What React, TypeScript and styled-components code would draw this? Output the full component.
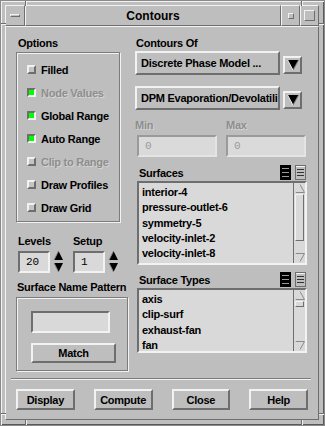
import React from "react";
import styled, { createGlobalStyle, css } from "styled-components";

const BG = "#bebebe";
const LIGHT = "#f2f2f2";
const DARK = "#6e6e6e";
const FIELD = "#d9d9d9";
const FONT = `"Liberation Sans", Arial, sans-serif`;
const DISABLED = "#8e8e8e";

const GlobalStyle = createGlobalStyle`
  html, body { margin: 0; padding: 0; background: ${BG}; }
  body { font-family: ${FONT}; }
`;

const raised = (w: number) => css`
  border-style: solid;
  border-width: ${w}px;
  border-color: ${LIGHT} ${DARK} ${DARK} ${LIGHT};
`;
const sunken = (w: number) => css`
  border-style: solid;
  border-width: ${w}px;
  border-color: ${DARK} ${LIGHT} ${LIGHT} ${DARK};
`;

const Window = styled.div`
  position: relative;
  width: 325px;
  height: 426px;
  box-sizing: border-box;
  background: ${BG};
  border: 1px solid #8a8a8a;
  box-shadow: inset 1px 1px 0 ${LIGHT}, inset -1px -1px 0 #5a5a5a;
  padding: 4px 5px 5px 4px;
  display: flex;
  flex-direction: column;
  font-family: ${FONT};
  font-weight: bold;
  font-size: 11px;
  letter-spacing: -0.25px;
  color: #000;
`;

const CornerV = styled.div<{ $x: number; $top?: boolean }>`
  position: absolute;
  left: ${(p) => p.$x}px;
  ${(p) => (p.$top ? "top: 0;" : "bottom: 0;")}
  width: 1px;
  height: 5px;
  background: ${DARK};
  box-shadow: 1px 0 0 ${LIGHT};
`;
const CornerH = styled.div<{ $y: number; $left?: boolean }>`
  position: absolute;
  top: ${(p) => p.$y}px;
  ${(p) => (p.$left ? "left: 0;" : "right: 0;")}
  width: 5px;
  height: 1px;
  background: ${DARK};
  box-shadow: 0 1px 0 ${LIGHT};
`;

const TitleBar = styled.div`
  display: flex;
  height: 21px;
  flex: none;
`;
const TitleButton = styled.div<{ $w: number }>`
  ${raised(1)}
  box-sizing: border-box;
  width: ${(p) => p.$w}px;
  display: flex;
  align-items: center;
  justify-content: center;
`;
const TitleText = styled.div`
  ${raised(1)}
  box-sizing: border-box;
  flex: 1;
  display: flex;
  align-items: center;
  justify-content: center;
  font-size: 12px;
  letter-spacing: 0;
`;
const MenuDash = styled.div`
  width: 10px;
  height: 3px;
  box-sizing: border-box;
  ${raised(1)}
  background: ${BG};
`;
const MinSquare = styled.div`
  width: 4px;
  height: 4px;
  ${raised(1)}
`;
const MaxSquare = styled.div`
  width: 11px;
  height: 11px;
  box-sizing: border-box;
  ${raised(1)}
`;

const Content = styled.div`
  ${raised(1)}
  flex: 1;
  display: flex;
  flex-direction: column;
  padding: 10px 10px 0 10px;
`;

const Main = styled.div`
  display: flex;
  align-items: flex-start;
  gap: 7px;
`;

const LeftCol = styled.div`
  width: 112px;
  display: flex;
  flex-direction: column;
`;
const RightCol = styled.div`
  width: 172px;
  display: flex;
  flex-direction: column;
`;

const disabledText = css`
  color: ${DISABLED};
  text-shadow: 1px 1px 0 #d4d4d4;
`;

const Label = styled.div<{ $indent?: number; $disabled?: boolean }>`
  height: 13px;
  line-height: 13px;
  padding-left: ${(p) => p.$indent ?? 0}px;
  white-space: nowrap;
  ${(p) => p.$disabled && disabledText}
`;

const Etched = styled.div`
  border: 1px solid #7c7c7c;
  box-shadow: inset 1px 1px 0 ${LIGHT}, 1px 1px 0 ${LIGHT};
`;

const OptionsFrame = styled(Etched)`
  margin-top: 2px;
  width: 104px;
  height: 170px;
  box-sizing: border-box;
  padding: 5px 0 0 10px;
`;

const ToggleRow = styled.div<{ $disabled?: boolean }>`
  height: 23px;
  display: flex;
  align-items: center;
  gap: 5px;
  white-space: nowrap;
  ${(p) => p.$disabled && disabledText}
`;
const Indicator = styled.div<{ $on?: boolean }>`
  width: 9px;
  height: 9px;
  box-sizing: border-box;
  ${(p) => (p.$on ? sunken(2) : raised(2))}
  background: ${(p) => (p.$on ? "#00ff00" : "#c4c4c4")};
`;

const SpinRow = styled.div`
  display: flex;
  gap: 9px;
  margin-top: 13px;
  padding-left: 2px;
`;
const SpinGroup = styled.div`
  display: flex;
  flex-direction: column;
  gap: 2px;
`;
const SpinControls = styled.div`
  display: flex;
  align-items: center;
  gap: 3px;
`;
const TextField = styled.div<{ $w: number; $h?: number; $disabled?: boolean }>`
  ${sunken(2)}
  box-sizing: border-box;
  width: ${(p) => p.$w}px;
  height: ${(p) => p.$h ?? 22}px;
  background: ${FIELD};
  font-family: "Liberation Mono", "Courier New", monospace;
  font-weight: normal;
  letter-spacing: 0;
  font-size: 11px;
  display: flex;
  align-items: center;
  padding-left: 6px;
  color: ${(p) => (p.$disabled ? "#9a9a9a" : "#000")};
  ${(p) =>
    p.$disabled &&
    css`
      border-color: #9a9a9a #e4e4e4 #e4e4e4 #9a9a9a;
      background: #dadada;
    `}
`;

const PatternLabel = styled(Label)`
  margin-top: 8px;
`;
const PatternFrame = styled(Etched)`
  margin-top: 3px;
  width: 112px;
  height: 74px;
  box-sizing: border-box;
  padding: 13px 0 0 14px;
  display: flex;
  flex-direction: column;
  gap: 10px;
`;

const PushButton = styled.button<{ $w: number; $h: number }>`
  ${raised(2)}
  box-sizing: border-box;
  width: ${(p) => p.$w}px;
  height: ${(p) => p.$h}px;
  background: ${BG};
  font-family: ${FONT};
  font-weight: bold;
  font-size: 11px;
  letter-spacing: -0.25px;
  color: #000;
  padding: 0;
  display: flex;
  align-items: center;
  justify-content: center;
`;

const Separator = styled.div`
  margin: 7px -3px 0 -5px;
  height: 1px;
  background: #7c7c7c;
  box-shadow: 0 1px 0 ${LIGHT};
`;
const ButtonRow = styled.div`
  display: flex;
  gap: 19px;
  margin-top: 10px;
`;

const OptionRow = styled.div<{ $mt: number }>`
  display: flex;
  align-items: flex-end;
  gap: 3px;
  margin-top: ${(p) => p.$mt}px;
`;
const OptionMenu = styled.div`
  ${raised(2)}
  box-sizing: border-box;
  width: 145px;
  height: 24px;
  display: flex;
  align-items: center;
  padding-left: 4px;
  white-space: nowrap;
  overflow: hidden;
`;
const ArrowButton = styled.div`
  ${raised(2)}
  box-sizing: border-box;
  width: 19px;
  height: 18px;
  margin-bottom: 1px;
  display: flex;
  align-items: center;
  justify-content: center;
`;

const RangeRow = styled.div`
  display: flex;
  gap: 9px;
  margin-top: 9px;
`;
const RangeGroup = styled.div<{ $fieldIndent: number }>`
  display: flex;
  flex-direction: column;
  gap: 3px;
  & > ${TextField as any} {
    margin-left: ${(p) => p.$fieldIndent}px;
  }
`;

const ListHeader = styled.div<{ $mt: number }>`
  display: flex;
  align-items: center;
  height: 15px;
  margin-top: ${(p) => p.$mt}px;
  padding-left: 4px;
`;
const HeaderTitle = styled.div`
  flex: 1;
`;
const HeaderIcons = styled.div`
  display: flex;
  gap: 4px;
  padding-right: 1px;
`;
const ListBox = styled.div<{ $h: number }>`
  ${sunken(2)}
  box-sizing: border-box;
  margin-left: 2px;
  margin-top: 1px;
  width: 170px;
  height: ${(p) => p.$h}px;
  background: ${FIELD};
  display: flex;
`;
const ListItems = styled.div`
  flex: 1;
  padding: 2px 0 0 3px;
  line-height: 15.3px;
  white-space: nowrap;
  overflow: hidden;
`;
const ScrollBar = styled.div`
  width: 12px;
  box-sizing: border-box;
  border-left: 1px solid ${DARK};
  background: ${FIELD};
  display: flex;
  flex-direction: column;
  align-items: center;
  padding: 1px 0;
`;
const Slider = styled.div<{ $h: number }>`
  ${raised(1)}
  box-sizing: border-box;
  width: 9px;
  height: ${(p) => p.$h}px;
  margin-top: 1px;
`;
const ScrollSpacer = styled.div`
  flex: 1;
`;

const DownTri = () => (
  <svg width="12" height="12" viewBox="0 0 12 12">
    <polygon points="0,1 12,1 6,12" fill="#6e6e6e" />
    <polygon points="1,1 11,1 6,10" fill="#000" />
    <line x1="0.5" y1="1" x2="6" y2="11.5" stroke="#f2f2f2" strokeWidth="1" />
  </svg>
);

const SpinArrows = () => (
  <svg width="11" height="23" viewBox="0 0 11 23">
    <polygon points="5.5,1 10,10 1,10" fill="#000" />
    <line x1="5.5" y1="1" x2="1" y2="10" stroke="#8a8a8a" />
    <polygon points="1,13 10,13 5.5,22" fill="#000" />
    <line x1="1" y1="13" x2="5.5" y2="22" stroke="#8a8a8a" />
  </svg>
);

const SelectAllIcon = () => (
  <svg width="11" height="15" viewBox="0 0 11 15">
    <rect x="0" y="0" width="11" height="15" fill="#000" />
    <rect x="2" y="3" width="7" height="1" fill="#9a9a9a" />
    <rect x="2" y="7" width="7" height="1" fill="#9a9a9a" />
    <rect x="2" y="11" width="7" height="1" fill="#9a9a9a" />
  </svg>
);
const DeselectIcon = () => (
  <svg width="11" height="15" viewBox="0 0 11 15">
    <rect x="0.5" y="0.5" width="10" height="14" fill="#bebebe" stroke="#6e6e6e" />
    <rect x="1" y="1" width="9" height="1" fill="#f2f2f2" />
    <rect x="2" y="4" width="7" height="1" fill="#333" />
    <rect x="2" y="7" width="7" height="1" fill="#333" />
    <rect x="2" y="10" width="7" height="1" fill="#333" />
  </svg>
);
const ScrollUp = () => (
  <svg width="10" height="9" viewBox="0 0 10 9">
    <polygon points="5,0.5 9.5,8.5 0.5,8.5" fill="none" stroke="#8a8a8a" />
    <line x1="5" y1="0.5" x2="0.5" y2="8.5" stroke="#f2f2f2" />
  </svg>
);
const ScrollDown = () => (
  <svg width="10" height="9" viewBox="0 0 10 9">
    <polygon points="0.5,0.5 9.5,0.5 5,8.5" fill="none" stroke="#8a8a8a" />
    <line x1="0.5" y1="0.5" x2="5" y2="8.5" stroke="#f2f2f2" />
  </svg>
);

const toggles: { label: string; on?: boolean; disabled?: boolean }[] = [
  { label: "Filled" },
  { label: "Node Values", on: true, disabled: true },
  { label: "Global Range", on: true },
  { label: "Auto Range", on: true },
  { label: "Clip to Range", disabled: true },
  { label: "Draw Profiles" },
  { label: "Draw Grid" },
];

const surfaces = [
  "interior-4",
  "pressure-outlet-6",
  "symmetry-5",
  "velocity-inlet-2",
  "velocity-inlet-8",
];
const surfaceTypes = ["axis", "clip-surf", "exhaust-fan", "fan"];

export default function App() {
  return (
    <>
      <GlobalStyle />
      <Window>
        <CornerV $x={24} $top />
        <CornerV $x={300} $top />
        <CornerV $x={24} />
        <CornerV $x={300} />
        <CornerH $y={22} $left />
        <CornerH $y={22} />
        <CornerH $y={412} $left />
        <CornerH $y={412} />
        <TitleBar>
          <TitleButton $w={20}>
            <MenuDash />
          </TitleButton>
          <TitleText>Contours</TitleText>
          <TitleButton $w={19}>
            <MinSquare />
          </TitleButton>
          <TitleButton $w={19}>
            <MaxSquare />
          </TitleButton>
        </TitleBar>
        <Content>
          <Main>
            <LeftCol>
              <Label $indent={2}>Options</Label>
              <OptionsFrame>
                {toggles.map((t) => (
                  <ToggleRow key={t.label} $disabled={t.disabled}>
                    <Indicator $on={t.on} />
                    {t.label}
                  </ToggleRow>
                ))}
              </OptionsFrame>
              <SpinRow>
                <SpinGroup>
                  <Label>Levels</Label>
                  <SpinControls>
                    <TextField $w={32}>20</TextField>
                    <SpinArrows />
                  </SpinControls>
                </SpinGroup>
                <SpinGroup>
                  <Label>Setup</Label>
                  <SpinControls>
                    <TextField $w={32}>1</TextField>
                    <SpinArrows />
                  </SpinControls>
                </SpinGroup>
              </SpinRow>
              <PatternLabel $indent={1}>Surface Name Pattern</PatternLabel>
              <PatternFrame>
                <TextField $w={79} />
                <PushButton $w={85} $h={20}>
                  Match
                </PushButton>
              </PatternFrame>
            </LeftCol>
            <RightCol>
              <Label $indent={1}>Contours Of</Label>
              <OptionRow $mt={1}>
                <OptionMenu>Discrete Phase Model ...</OptionMenu>
                <ArrowButton>
                  <DownTri />
                </ArrowButton>
              </OptionRow>
              <OptionRow $mt={11}>
                <OptionMenu>DPM Evaporation/Devolatili</OptionMenu>
                <ArrowButton>
                  <DownTri />
                </ArrowButton>
              </OptionRow>
              <RangeRow>
                <RangeGroup $fieldIndent={2}>
                  <Label $disabled>Min</Label>
                  <TextField $w={80} $disabled>
                    0
                  </TextField>
                </RangeGroup>
                <RangeGroup $fieldIndent={0}>
                  <Label $disabled>Max</Label>
                  <TextField $w={80} $disabled>
                    0
                  </TextField>
                </RangeGroup>
              </RangeRow>
              <ListHeader $mt={8}>
                <HeaderTitle>Surfaces</HeaderTitle>
                <HeaderIcons>
                  <SelectAllIcon />
                  <DeselectIcon />
                </HeaderIcons>
              </ListHeader>
              <ListBox $h={84}>
                <ListItems>
                  {surfaces.map((s) => (
                    <div key={s}>{s}</div>
                  ))}
                </ListItems>
                <ScrollBar>
                  <ScrollUp />
                  <Slider $h={47} />
                  <ScrollSpacer />
                  <ScrollDown />
                </ScrollBar>
              </ListBox>
              <ListHeader $mt={7}>
                <HeaderTitle>Surface Types</HeaderTitle>
                <HeaderIcons>
                  <SelectAllIcon />
                  <DeselectIcon />
                </HeaderIcons>
              </ListHeader>
              <ListBox $h={65}>
                <ListItems>
                  {surfaceTypes.map((s) => (
                    <div key={s}>{s}</div>
                  ))}
                </ListItems>
                <ScrollBar>
                  <ScrollUp />
                  <Slider $h={6} />
                  <ScrollSpacer />
                  <ScrollDown />
                </ScrollBar>
              </ListBox>
            </RightCol>
          </Main>
          <Separator />
          <ButtonRow>
            <PushButton $w={59} $h={21}>Display</PushButton>
            <PushButton $w={59} $h={21}>Compute</PushButton>
            <PushButton $w={59} $h={21}>Close</PushButton>
            <PushButton $w={59} $h={21}>Help</PushButton>
          </ButtonRow>
        </Content>
      </Window>
    </>
  );
}
